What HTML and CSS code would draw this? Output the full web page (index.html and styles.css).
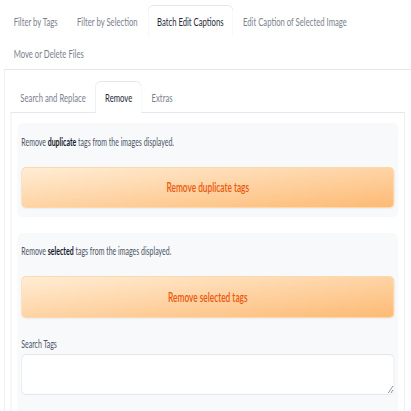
FILE: index.html
```html
<!DOCTYPE html>
<html lang="en">
<head>
<meta charset="utf-8">
<title>Batch Edit Captions</title>
<link rel="stylesheet" href="styles.css">
</head>
<body>
<div class="viewport">
<div class="page">
  <div class="tabs">
    <div class="tab-nav">
      <button class="tab">Filter by Tags</button>
      <button class="tab">Filter by Selection</button>
      <button class="tab selected">Batch Edit Captions</button>
      <button class="tab">Edit Caption of Selected Image</button>
      <button class="tab">Move or Delete Files</button>
    </div>
    <div class="tab-panel outer-panel">
      <div class="tabs">
        <div class="tab-nav sub-nav">
          <button class="tab">Search and Replace</button>
          <button class="tab selected">Remove</button>
          <button class="tab">Extras</button>
        </div>
        <div class="tab-panel inner-panel">
          <div class="group first">
            <p class="desc">Remove <strong>duplicate</strong> tags from the images displayed.</p>
            <button class="primary">Remove duplicate tags</button>
          </div>
          <div class="group second">
            <p class="desc">Remove <strong>selected</strong> tags from the images displayed.</p>
            <button class="primary">Remove selected tags</button>
            <label class="field-label" for="search-tags">Search Tags</label>
            <textarea id="search-tags" class="field"></textarea>
          </div>
        </div>
      </div>
    </div>
  </div>
</div>
</div>
</body>
</html>
```

FILE: styles.css
```css
:root {
  --sx: 0.665;
  --border: #e5e7eb;
}

* {
  box-sizing: border-box;
}

html, body {
  margin: 0;
  padding: 0;
  background: #ffffff;
}

.viewport {
  width: 411px;
  height: 411px;
  overflow: hidden;
}

.page {
  width: calc(411px / var(--sx));
  padding-left: calc(4px / var(--sx));
  transform: scaleX(var(--sx));
  transform-origin: 0 0;
  font-family: "Lato", "Liberation Sans", sans-serif;
  color: #374151;
}

.tab-nav {
  display: flex;
  flex-wrap: wrap;
  padding-top: 5px;
  border-bottom: 1px solid var(--border);
}

.tab {
  height: 32px;
  margin: 0;
  padding: 0 calc(9px / var(--sx));
  border: 1px solid transparent;
  border-width: 1px calc(1px / var(--sx)) 0;
  border-radius: calc(6px / var(--sx)) calc(6px / var(--sx)) 0 0 / 6px 6px 0 0;
  background: transparent;
  font-family: inherit;
  font-size: 11.6px;
  color: #7b818c;
  white-space: nowrap;
  cursor: pointer;
}

.tab.selected {
  border-color: var(--border);
  background: #ffffff;
  color: #1f2937;
}

.sub-nav {
  padding-top: 0;
}

.sub-nav .tab {
  height: 31px;
}

.sub-nav .tab.selected {
  height: 32px;
  margin-bottom: -1px;
}

.tab-panel {
  border: 0 solid var(--border);
  border-width: 0 calc(1px / var(--sx)) 1px;
}

.outer-panel {
  border-right-width: 0;
  padding: 11px calc(6px / var(--sx)) 12px;
}

.inner-panel {
  padding: 10px calc(6px / var(--sx)) 12px;
}

.group {
  background: #f8f9fb;
  border-radius: calc(6px / var(--sx)) / 6px;
  padding: 12px calc(4px / var(--sx)) 9px;
  display: flex;
  flex-direction: column;
}

.group.second {
  margin-top: 16px;
  padding-top: 11px;
  padding-bottom: 30px;
}

.desc {
  margin: 0;
  font-size: 10.5px;
  line-height: 14px;
  color: #4b5563;
}

.desc strong {
  color: #111827;
  font-weight: 700;
}

.primary {
  margin-top: 18px;
  height: 41px;
  border: 1px solid #fed7aa;
  border-width: 1px calc(1px / var(--sx));
  border-radius: calc(5px / var(--sx)) / 5px;
  background: linear-gradient(to bottom right, #ffedd5, #fdba74);
  color: #ea580c;
  font-family: inherit;
  font-size: 12.5px;
  font-weight: 600;
  box-shadow: 0 1px 2px rgba(0, 0, 0, 0.05);
  cursor: pointer;
}

.second .primary {
  height: 42px;
}

.field-label {
  margin-top: 19px;
  font-size: 10.5px;
  line-height: 14px;
  color: #4b5563;
}

.field {
  margin-top: 3px;
  height: 41px;
  border: 1px solid var(--border);
  border-width: 1px calc(1px / var(--sx));
  border-radius: calc(5px / var(--sx)) / 5px;
  background: #ffffff;
  box-shadow: inset 0 0 0 1px rgba(0, 0, 0, 0.01);
  font-family: inherit;
  resize: vertical;
}
```
